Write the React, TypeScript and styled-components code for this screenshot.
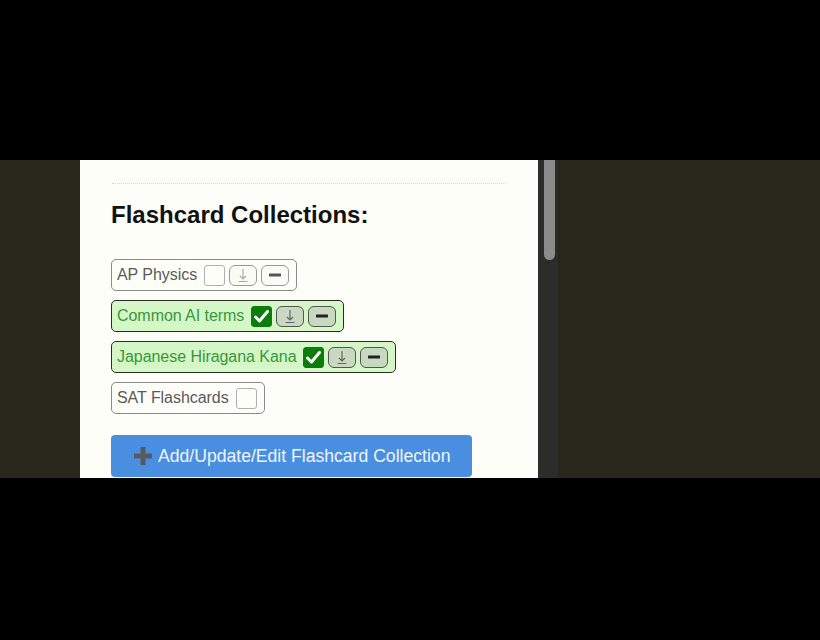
import React from 'react';
import styled, { createGlobalStyle } from 'styled-components';

const GlobalStyle = createGlobalStyle`
  html, body {
    margin: 0;
    padding: 0;
    background: #000;
  }
  body {
    font-family: 'Liberation Sans', Arial, sans-serif;
  }
`;

interface Collection {
  id: string;
  name: string;
  selected: boolean;
  editable: boolean;
}

const collections: Collection[] = [
  { id: 'ap', name: 'AP Physics', selected: false, editable: true },
  { id: 'ai', name: 'Common AI terms', selected: true, editable: true },
  { id: 'jp', name: 'Japanese Hiragana Kana', selected: true, editable: true },
  { id: 'sat', name: 'SAT Flashcards', selected: false, editable: false },
];

const Screen = styled.div`
  width: 820px;
  height: 640px;
  display: flex;
  flex-direction: column;
  background: #000;
`;

const Band = styled.div<{ $h: number }>`
  height: ${(p) => p.$h}px;
  flex: none;
`;

const Viewport = styled.div`
  height: 318px;
  display: flex;
  background: #27271c;
  overflow: hidden;
`;

const Gutter = styled.div`
  width: 80px;
  flex: none;
`;

const Panel = styled.div`
  width: 458px;
  flex: none;
  background: #fefef9;
  padding: 23px 32px 0 31px;
  box-sizing: border-box;
  overflow: hidden;
`;

const Rule = styled.div`
  border-top: 1px dotted #d6d6d6;
  margin-left: 1px;
`;

const Heading = styled.h2`
  margin: 17px 0 0;
  font-size: 24px;
  font-weight: bold;
  color: #111;
  line-height: 28px;
`;

const List = styled.div`
  margin-top: 30px;
  display: flex;
  flex-direction: column;
  align-items: flex-start;
  gap: 9px;
`;

const Row = styled.div<{ $on: boolean }>`
  display: flex;
  align-items: center;
  height: 32px;
  box-sizing: border-box;
  padding: 0 7px 0 5px;
  border-radius: 5px;
  border: 1px solid ${(p) => (p.$on ? '#2b2b2b' : '#8a8a8a')};
  background: ${(p) => (p.$on ? '#d5f6c6' : '#fefef9')};
  color: ${(p) => (p.$on ? '#35993a' : '#5a5a5a')};
  font-size: 16px;
`;

const Name = styled.span`
  margin-right: 7px;
  white-space: nowrap;
  letter-spacing: -0.05px;
`;

const Check = styled.span<{ $on: boolean }>`
  width: 21px;
  height: 21px;
  box-sizing: border-box;
  border-radius: 3px;
  display: flex;
  align-items: center;
  justify-content: center;
  background: ${(p) => (p.$on ? '#0b7d0b' : '#fefef9')};
  border: 1px solid ${(p) => (p.$on ? '#0b7d0b' : '#b0b0b0')};
`;

const Tool = styled.span<{ $on: boolean }>`
  width: 28px;
  height: 21px;
  box-sizing: border-box;
  margin-left: 4px;
  border-radius: 6px;
  display: flex;
  align-items: center;
  justify-content: center;
  border: 1px solid ${(p) => (p.$on ? '#555' : '#9a9a9a')};
  background: ${(p) => (p.$on ? '#c9d9c1' : '#fbfbf6')};
`;

const AddButton = styled.button`
  margin-top: 21px;
  width: 361px;
  height: 42px;
  border: none;
  border-radius: 4px;
  background: #4a8fdf;
  color: #eef4ff;
  font-family: 'Liberation Sans', Arial, sans-serif;
  font-size: 17.6px;
  display: flex;
  align-items: center;
  padding: 0 0 0 22px;
  gap: 5px;
`;

const Scrollbar = styled.div`
  width: 20px;
  flex: none;
  background: #2c2c2a;
  display: flex;
  justify-content: center;
`;

const Thumb = styled.div`
  width: 11px;
  height: 100px;
  margin-left: 2px;
  background: #8b8b8b;
  border-radius: 0 0 6px 6px;
`;

function CheckMark() {
  return (
    <svg width="15" height="13" viewBox="0 0 15 13">
      <path d="M1.5 7 L5.5 11 L13.5 1.5" fill="none" stroke="#fff" strokeWidth="3" strokeLinecap="round" strokeLinejoin="round" />
    </svg>
  );
}

function DownloadIcon({ color }: { color: string }) {
  return (
    <svg width="12" height="15" viewBox="0 0 12 15">
      <path d="M6 1 V11 M3 8 L6 11 L9 8 M1.5 13.5 H10.5" fill="none" stroke={color} strokeWidth="1.2" />
    </svg>
  );
}

function MinusIcon({ color }: { color: string }) {
  return (
    <svg width="12" height="4" viewBox="0 0 12 4">
      <rect x="0" y="0.5" width="12" height="3" rx="0.5" fill={color} />
    </svg>
  );
}

function PlusIcon() {
  return (
    <svg width="20" height="20" viewBox="0 0 20 20">
      <path d="M7.5 1 H12.5 V7.5 H19 V12.5 H12.5 V19 H7.5 V12.5 H1 V7.5 H7.5 Z" fill="#555a62" />
    </svg>
  );
}

function CollectionRow({ item }: { item: Collection }) {
  const on = item.selected;
  return (
    <Row $on={on}>
      <Name>{item.name}</Name>
      <Check $on={on}>{on && <CheckMark />}</Check>
      {item.editable && (
        <>
          <Tool $on={on}>
            <DownloadIcon color={on ? '#666' : '#aaa'} />
          </Tool>
          <Tool $on={on}>
            <MinusIcon color={on ? '#222' : '#555'} />
          </Tool>
        </>
      )}
    </Row>
  );
}

export default function App() {
  return (
    <>
      <GlobalStyle />
      <Screen>
        <Band $h={160} />
        <Viewport>
          <Gutter />
          <Panel>
            <Rule />
            <Heading>Flashcard Collections:</Heading>
            <List>
              {collections.map((c) => (
                <CollectionRow key={c.id} item={c} />
              ))}
            </List>
            <AddButton>
              <PlusIcon />
              Add/Update/Edit Flashcard Collection
            </AddButton>
          </Panel>
          <Scrollbar>
            <Thumb />
          </Scrollbar>
        </Viewport>
        <Band $h={162} />
      </Screen>
    </>
  );
}
